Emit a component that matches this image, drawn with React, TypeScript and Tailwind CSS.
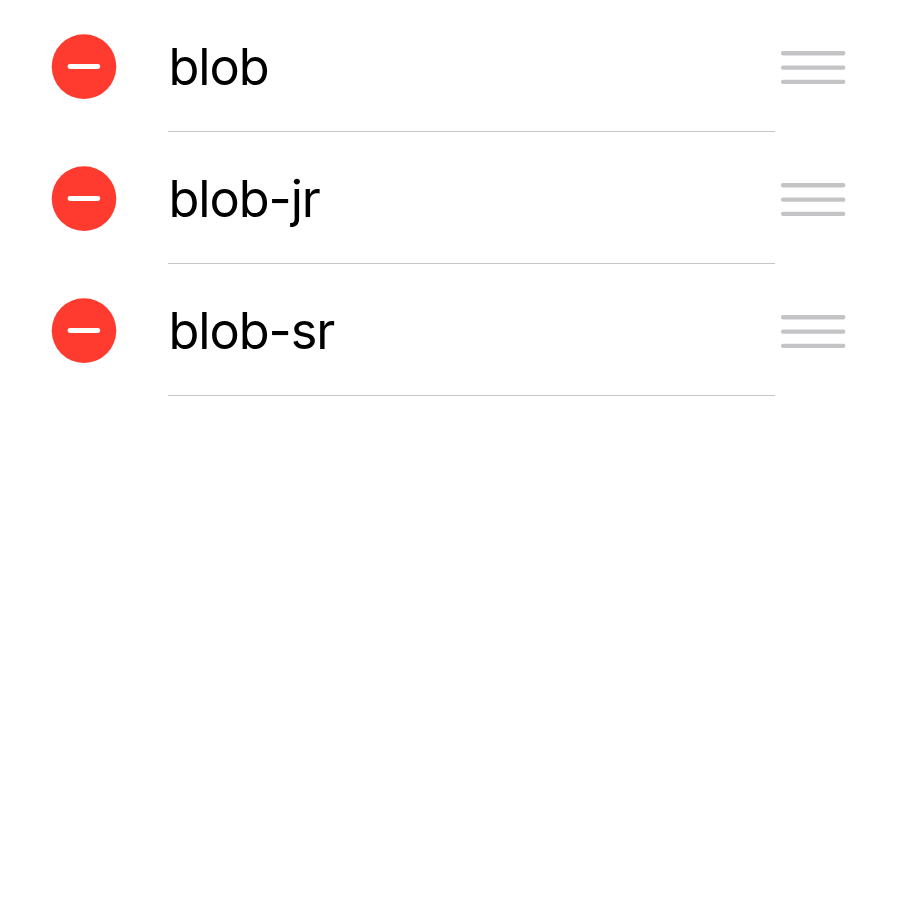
const items = ["blob", "blob-jr", "blob-sr"];

function DeleteIcon() {
  return (
    <svg className="h-[66px] w-[66px] shrink-0" viewBox="0 0 66 66">
      <circle cx="33" cy="32.6" r="32.3" fill="#ff3b30" />
      <rect x="16.6" y="30" width="32.6" height="4.9" rx="2.4" fill="#fff" />
    </svg>
  );
}

function Handle() {
  return (
    <svg className="h-[34px] w-[65px]" viewBox="0 0 65 34" fill="#c4c4c6">
      <rect x="0" y="0.1" width="64.4" height="4.3" rx="2" />
      <rect x="0" y="14.4" width="64.4" height="4.3" rx="2" />
      <rect x="0" y="28.8" width="64.4" height="4.3" rx="2" />
    </svg>
  );
}

export default function App() {
  return (
    <main className="h-[900px] w-[900px] overflow-hidden bg-white font-['Inter',sans-serif] text-black">
      <ul>
        {items.map((name) => (
          <li key={name} className="flex h-[132px] items-start pl-[51px]">
            <button className="mt-[34px] h-[66px] w-[66px]" aria-label="Delete">
              <DeleteIcon />
            </button>
            <div className="ml-[51px] h-[132px] w-[607px] border-b border-[#c6c6c8] pt-[35px]">
              <span className="block pl-[0.5px] text-[50.5px] leading-[64px] tracking-[-1.08px]">{name}</span>
            </div>
            <div className="ml-[6px] pt-[51px]">
              <Handle />
            </div>
          </li>
        ))}
      </ul>
    </main>
  );
}
